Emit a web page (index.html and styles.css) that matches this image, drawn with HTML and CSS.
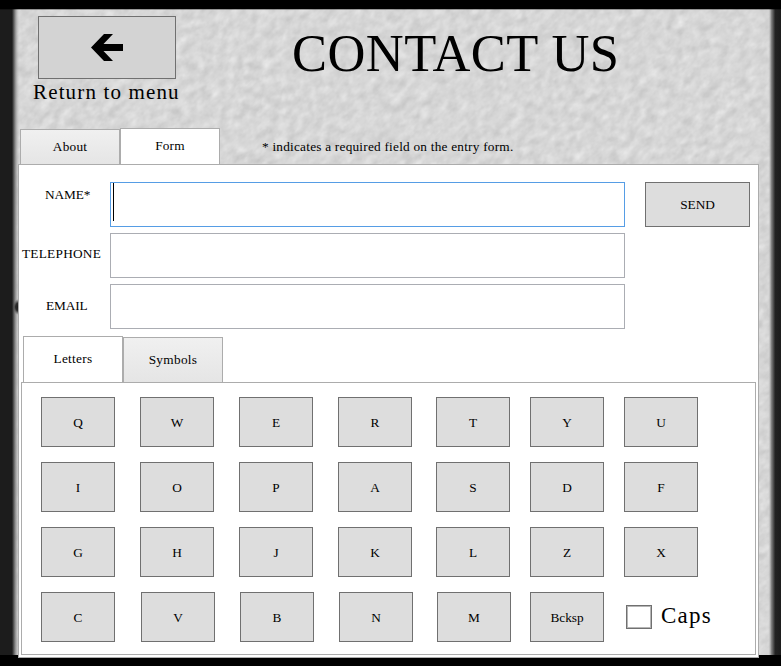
FILE: index.html
```html
<!DOCTYPE html>
<html lang="en">
<head>
<meta charset="utf-8">
<title>Contact Us</title>
<link rel="stylesheet" href="styles.css">
</head>
<body>
<div class="screen">
  <svg class="texture" width="781" height="666" aria-hidden="true">
    <defs>
      <filter id="stone" x="0" y="0" width="100%" height="100%" color-interpolation-filters="sRGB">
        <feTurbulence type="fractalNoise" baseFrequency="0.09 0.13" numOctaves="3" seed="21"/>
        <feColorMatrix values="0.12 0.1 0 0 0.73  0.12 0.1 0 0 0.73  0.12 0.1 0 0 0.73  0 0 0 0 1"/>
      </filter>
      <linearGradient id="left"><stop offset="0" stop-color="#1c1c1c"/><stop offset=".6" stop-color="#1c1c1c"/><stop offset=".75" stop-color="#858585"/><stop offset="1" stop-color="#d8d8d8" stop-opacity="0"/></linearGradient>
      <linearGradient id="right"><stop offset="0" stop-color="#d8d8d8" stop-opacity="0"/><stop offset=".25" stop-color="#858585"/><stop offset=".55" stop-color="#222"/><stop offset="1" stop-color="#1c1c1c"/></linearGradient>
      <radialGradient id="spot"><stop offset="0" stop-color="#1c1c1c"/><stop offset=".5" stop-color="#222" stop-opacity=".9"/><stop offset="1" stop-color="#555" stop-opacity="0"/></radialGradient>
    </defs>
    <g transform="rotate(-45 390 333)"><rect x="-200" y="-200" width="1180" height="1066" filter="url(#stone)"/></g>
    <rect width="20" height="666" fill="url(#left)"/>
    <rect x="768" width="13" height="666" fill="url(#right)"/>
    <ellipse cx="18" cy="307" rx="5" ry="8" fill="url(#spot)"/>
    <rect width="781" height="9" fill="#000"/>
    <rect y="9" width="781" height="1" fill="#000" opacity=".3"/>
    <rect y="655" width="781" height="11" fill="#000"/>
  </svg>

  <header class="top">
    <div class="return">
      <button class="back" aria-label="Return to menu">
        <svg width="32" height="27" viewBox="0 0 32 27"><path d="M0 13.5 13 0H22L12.5 10H32V17H12.5L22 27H13Z"/></svg>
      </button>
      <div class="return-label">Return to menu</div>
    </div>
    <h1>CONTACT US</h1>
  </header>

  <nav class="tabs main-tabs">
    <div class="tab">About</div>
    <div class="tab active">Form</div>
    <p class="hint">* indicates a required field on the entry form.</p>
  </nav>

  <main class="panel">
    <form class="fields">
      <label class="name-label">NAME*</label><div class="input focused"><span class="caret"></span></div><button type="button" class="send">SEND</button>
      <label class="phone-label">TELEPHONE</label><div class="input"></div><span></span>
      <label class="email-label">EMAIL</label><div class="input"></div><span></span>
    </form>
    <div class="tabs key-tabs">
      <div class="tab active">Letters</div>
      <div class="tab">Symbols</div>
    </div>
    <section class="keyboard">
      <div class="row"><button>Q</button><button>W</button><button>E</button><button>R</button><button>T</button><button>Y</button><button>U</button></div>
      <div class="row"><button>I</button><button>O</button><button>P</button><button>A</button><button>S</button><button>D</button><button>F</button></div>
      <div class="row"><button>G</button><button>H</button><button>J</button><button>K</button><button>L</button><button>Z</button><button>X</button></div>
      <div class="row last"><button>C</button><button>V</button><button>B</button><button>N</button><button>M</button><button>Bcksp</button>
        <div class="caps"><span class="box"></span><span class="caps-text">Caps</span></div></div>
    </section>
  </main>
</div>
</body>
</html>
```
FILE: styles.css
```css
* { box-sizing: border-box; }
body { margin: 0; overflow: hidden; color: #000; font: 13.3px/16px "Century Schoolbook", "Liberation Serif", serif; letter-spacing: .22px; }
h1, p { margin: 0; }
button { margin: 0; padding: 1px 0 0; border: 1px solid #707070; border-radius: 0; background: #ddd; color: #000; font: inherit; letter-spacing: 0; }
.screen { width: 781px; height: 666px; position: relative; isolation: isolate; background: #d8d8d8; overflow: hidden; }
.texture { position: absolute; inset: 0; z-index: -1; }
.top { display: flex; height: 128px; padding: 16px 0 0 33px; }
.return { width: 146px; display: flex; flex-direction: column; }
.back { width: 138px; height: 63px; padding: 0; margin-left: 5px; background: #d3d3d3; display: flex; align-items: center; justify-content: center; }
.back svg { display: block; }
.return-label { font-size: 21px; line-height: 26px; letter-spacing: 1.15px; white-space: nowrap; }
h1 { margin: 6px 0 0 113px; font-size: 52.5px; line-height: 62px; font-weight: 400; letter-spacing: .45px; white-space: nowrap; }
.tabs { display: flex; align-items: flex-end; }
.tab { width: 100px; height: 35px; border: 1px solid #acacac; border-bottom: 0; background: linear-gradient(#f0f0f0, #e5e5e5); display: flex; align-items: center; justify-content: center; }
.tab.active { height: 36px; background: #fff; }
.main-tabs { height: 36px; padding-left: 20px; }
.main-tabs .tab.active { padding-bottom: 1px; }
.hint { margin-left: 42px; padding-bottom: 9px; white-space: nowrap; }
.panel { width: 741px; height: 494px; margin-left: 18px; padding: 17px 2px 2px 3px; border: 1px solid #acacac; background: #fff; }
.fields { display: grid; grid-template-columns: 88px 515px 105px; grid-template-rows: 45px 45px 45px; row-gap: 6px; height: 154px; }
.fields label { white-space: nowrap; letter-spacing: -.1px; }
.name-label { padding: 5px 0 0 23px; }
.fields .phone-label { padding-top: 13px; letter-spacing: .25px; }
.email-label { padding: 14px 0 0 24px; }
.input { border: 1px solid #abadb3; background: #fff; }
.input.focused { border-color: #569de5; }
.caret { display: block; width: 1px; height: 38px; margin-left: 2px; background: #000; }
.send { margin-left: 20px; width: 105px; padding: 0; }
.key-tabs { height: 46px; padding-left: 1px; }
.key-tabs .tab { height: 45px; letter-spacing: .3px; }
.key-tabs .tab.active { height: 46px; padding-bottom: 1px; }
.keyboard { width: 735px; height: 273px; margin-left: -1px; padding: 14px 0 0 19px; border: 1px solid #acacac; display: flex; flex-direction: column; gap: 15px; }
.row { display: grid; height: 50px; grid-template-columns: 99px 99px 99px 98px 94px 94px 130px; }
.row.last { grid-template-columns: 100px 99px 99px 98px 93px 94px 130px; }
.row button { width: 74px; height: 50px; }
.caps { display: flex; align-items: center; padding: 0 0 0 3px; margin-left: -1px; }
.box { width: 26px; height: 24px; border: 1px solid #707070; box-shadow: inset 0 0 0 1px #b5b5b5; background: #fff; }
.caps-text { margin: -2px 0 0 9px; font-size: 23px; line-height: 28px; letter-spacing: 1.2px; }
```
